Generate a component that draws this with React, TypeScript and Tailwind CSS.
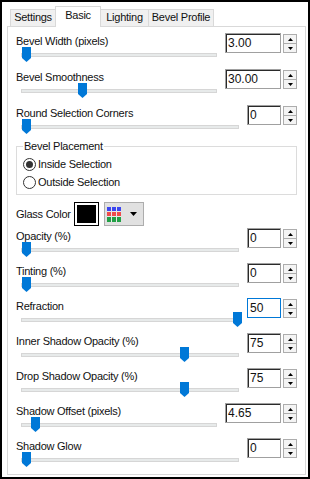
import React from 'react';

type Row = {
  label: string;
  value: string;
  thumbX: number;
  wide?: boolean;
  focused?: boolean;
};

const topRows: Row[] = [
  { label: 'Bevel Width (pixels)', value: '3.00', thumbX: 22, wide: true },
  { label: 'Bevel Smoothness', value: '30.00', thumbX: 78, wide: true },
  { label: 'Round Selection Corners', value: '0', thumbX: 22 },
];

const bottomRows: Row[] = [
  { label: 'Opacity (%)', value: '0', thumbX: 22 },
  { label: 'Tinting (%)', value: '0', thumbX: 22 },
  { label: 'Refraction', value: '50', thumbX: 233, focused: true },
  { label: 'Inner Shadow Opacity (%)', value: '75', thumbX: 180 },
  { label: 'Drop Shadow Opacity (%)', value: '75', thumbX: 180 },
  { label: 'Shadow Offset (pixels)', value: '4.65', thumbX: 31, wide: true },
  { label: 'Shadow Glow', value: '0', thumbX: 22 },
];

const Arrow = ({ up }: { up?: boolean }) => (
  <svg width="5" height="3" viewBox="0 0 5 3">
    <path d={up ? 'M0 3 L2.5 0 L5 3 Z' : 'M0 0 L5 0 L2.5 3 Z'} fill="#000" />
  </svg>
);

const SpinBox = ({ value, wide, focused }: { value: string; wide?: boolean; focused?: boolean }) => (
  <div className="flex items-start gap-[2px]">
    <div
      className={
        focused
          ? 'w-[34px] h-[20px] border border-[#0078d7] pl-[2px] leading-[18px] text-[12px] tracking-normal bg-white'
          : wide
          ? 'w-[56px] h-[20px] border border-[#a0a0a0] shadow-[inset_1px_1px_0_#2a2a2a] pl-[2px] leading-[18px] text-[12px] tracking-normal bg-white'
          : 'w-[34px] h-[20px] border border-[#a0a0a0] shadow-[inset_1px_1px_0_#2a2a2a] pl-[2px] leading-[18px] text-[12px] tracking-normal bg-white'
      }
    >
      {value}
    </div>
    <div className="flex flex-col mt-[1px] w-[14px]">
      <div className="h-[10px] border border-[#adadad] bg-[#f4f4f4] flex items-center justify-center">
        <Arrow up />
      </div>
      <div className="h-[10px] -mt-[1px] border border-[#adadad] bg-[#f4f4f4] flex items-center justify-center">
        <Arrow />
      </div>
    </div>
  </div>
);

const Thumb = ({ x }: { x: number }) => (
  <svg
    width="9"
    height="15"
    viewBox="0 0 9 15"
    className="absolute top-[14px]"
    style={{ left: x - 16 }}
  >
    <path d="M0 0 H9 V11 L4.5 15 L0 11 Z" fill="#0078d7" />
  </svg>
);

const SliderRow = ({ row, tall }: { row: Row; tall?: boolean }) => (
  <div className={tall ? 'flex h-[36px]' : 'flex h-[35px]'}>
    <div className="flex-1 mr-[8px] relative">
      <div className="mt-[1px] h-[15px] leading-[15px] whitespace-nowrap">{row.label}</div>
      <div className="ml-[5px] mt-[4px] h-[4px] bg-[#e7eaea] border border-[#d6d6d6]" />
      <Thumb x={row.thumbX} />
    </div>
    <SpinBox value={row.value} wide={row.wide} focused={row.focused} />
  </div>
);

const Radio = ({ checked, label }: { checked?: boolean; label: string }) => (
  <div className="flex items-center h-[18px] gap-[2px]">
    <div className="w-[13px] h-[13px] rounded-full border border-[#333] bg-white flex items-center justify-center">
      {checked && <div className="w-[7px] h-[7px] rounded-full bg-[#333]" />}
    </div>
    <span className="leading-[15px]">{label}</span>
  </div>
);

const ColorGrid = () => (
  <svg width="14" height="15" viewBox="0 0 14 15">
    <rect x="0" y="0" width="14" height="15" fill="#e8e8e8" />
    {[0, 5, 10].map((x) => (
      <React.Fragment key={x}>
        <rect x={x} y="0" width="4" height="4" fill="#3c46f0" />
        <rect x={x} y="5" width="4" height="4" fill="#f04c4c" />
        <rect x={x} y="10" width="4" height="5" fill="#22a046" />
      </React.Fragment>
    ))}
  </svg>
);

export default function App() {
  return (
    <div className="w-[310px] h-[479px] border-2 border-black bg-white pt-[4px] pl-[5px] text-[11px] tracking-[-0.25px] text-[#111] font-['Liberation_Sans',Arial,sans-serif] overflow-hidden">
      {/* tabs */}
      <div className="flex items-end h-[20px] pl-[3px]">
        <div className="w-[45px] h-[17px] bg-[#f0f0f0] border-t border-l border-[#d9d9d9] text-center leading-[15px]">
          Settings
        </div>
        <div className="relative z-10 w-[46px] h-[21px] -mb-[1px] bg-white border-t border-l border-r border-[#d9d9d9] text-center pt-[1px] leading-[15px]">
          Basic
        </div>
        <div className="w-[47px] h-[17px] bg-[#f0f0f0] border-t border-[#d9d9d9] text-center leading-[15px]">
          Lighting
        </div>
        <div className="w-[66px] h-[17px] bg-[#f0f0f0] border-t border-l border-r border-[#d9d9d9] text-center leading-[15px]">
          Bevel Profile
        </div>
      </div>

      {/* panel */}
      <div className="w-[299px] h-[449px] border border-[#d9d9d9] bg-white px-[8px] pt-[6px] overflow-hidden">
        {topRows.map((r) => (
          <SliderRow key={r.label} row={r} tall />
        ))}

        <fieldset className="-mt-[2px] border border-[#dcdcdc] pl-[6px] pt-[1px] pb-[3px]">
          <legend className="px-[1px] leading-[15px]">Bevel Placement</legend>
          <Radio checked label="Inside Selection" />
          <Radio label="Outside Selection" />
        </fieldset>

        <div className="flex items-center h-[24px] mt-[7px]">
          <div className="w-[58px] leading-[15px] whitespace-nowrap">Glass Color</div>
          <div className="w-[25px] h-[24px] border border-black bg-white p-[2px]">
            <div className="w-full h-full bg-black" />
          </div>
          <div className="ml-[5px] w-[40px] h-[24px] border border-[#adadad] bg-[#e1e1e1] flex items-center pl-[2px]">
            <ColorGrid />
            <svg width="7" height="4" viewBox="0 0 7 4" className="ml-[9px]">
              <path d="M0 0 H7 L3.5 4 Z" fill="#000" />
            </svg>
          </div>
        </div>

        <div className="mt-[2px]">
          {bottomRows.map((r) => (
            <SliderRow key={r.label} row={r} />
          ))}
        </div>
      </div>
    </div>
  );
}
